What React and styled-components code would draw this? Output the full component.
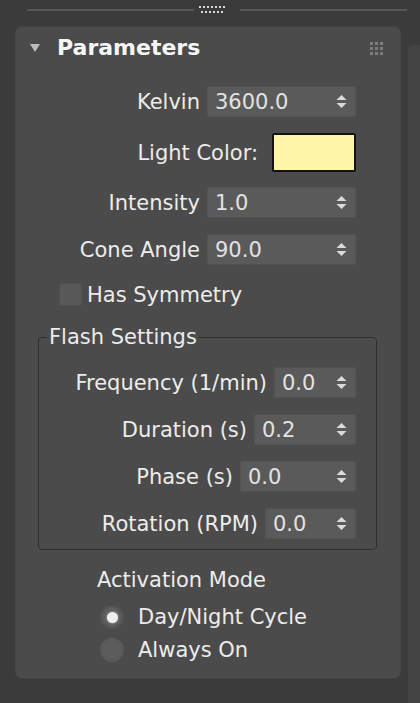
import React from 'react';
import styled, { createGlobalStyle } from 'styled-components';

const GlobalStyle = createGlobalStyle`
  html, body {
    margin: 0;
    padding: 0;
    background: #3b3b3b;
  }
  body {
    font-family: "DejaVu Sans", "Noto Sans", sans-serif;
    font-size: 21px;
    color: #ececec;
  }
`;

const PageStyled = styled.div`
  width: 420px;
  height: 703px;
  display: flex;
  flex-direction: column;
  overflow: hidden;
  background: #3b3b3b;
`;

const TopBarStyled = styled.div`
  height: 20px;
  display: flex;
  align-items: center;
  padding: 0 13px 0 27px;
`;

const SepLineStyled = styled.div`
  flex: 1;
  height: 2px;
  background: #585858;
`;

const TopGripStyled = styled.svg`
  margin: 0 12px 0 4px;
  flex: none;
`;

const MainStyled = styled.div`
  flex: 1;
  display: flex;
  padding: 7px 0 0 16px;
  gap: 8px;
`;

const PanelStyled = styled.div`
  width: 384px;
  height: 651px;
  box-sizing: border-box;
  background: #4b4b4b;
  border-radius: 5px;
  box-shadow: 0 0 0 1px #434343;
  display: flex;
  flex-direction: column;
`;

const TrackStyled = styled.div`
  width: 12px;
  margin-top: 18px;
  background: #434343;
  border-radius: 5px 0 0 0;
`;

const HeaderStyled = styled.div`
  height: 42px;
  display: flex;
  align-items: center;
  padding: 0 17px 0 14px;
`;

const TitleStyled = styled.div`
  flex: 1;
  margin-left: 17px;
  font-size: 22px;
  font-weight: bold;
  color: #f6f6f6;
  line-height: 26px;
`;

const BodyStyled = styled.div`
  display: flex;
  flex-direction: column;
  padding: 0 23px 0 22px;
`;

const RowStyled = styled.div`
  display: flex;
  align-items: center;
  justify-content: ${({ $left }) => ($left ? 'flex-start' : 'flex-end')};
  gap: ${({ $gap }) => $gap || 7}px;
  height: ${({ $h }) => $h || 31}px;
  margin-top: ${({ $mt }) => $mt || 0}px;
  padding: ${({ $pl, $pr }) => `0 ${$pr || 0}px 0 ${$pl || 0}px`};
  white-space: nowrap;
`;

const LabelStyled = styled.span`
  line-height: 24px;
`;

const SpinnerStyled = styled.div`
  width: ${({ $w }) => $w}px;
  height: 31px;
  box-sizing: border-box;
  background: #5a5a5a;
  border: 1px solid #535353;
  border-radius: 2px;
  display: flex;
  align-items: center;
  padding: 0 8px 0 7px;
  color: #e2e2e2;
`;

const ValueStyled = styled.span`
  flex: 1;
  line-height: 24px;
`;

const SwatchStyled = styled.div`
  width: 84px;
  height: 39px;
  box-sizing: border-box;
  border: 2px solid #121212;
  border-radius: 2px;
  background: #fff5a6;
`;

const CheckboxStyled = styled.div`
  width: 23px;
  height: 23px;
  box-sizing: border-box;
  background: #585858;
  border: 1px solid #515151;
  border-radius: 2px;
`;

const GroupStyled = styled.fieldset`
  margin: 19px 0 0 0;
  padding: 0;
  border: 1px solid #2e2e2e;
  border-radius: 4px;
  min-width: 0;
`;

const LegendStyled = styled.legend`
  margin-left: 8px;
  padding: 0 2px;
  line-height: 24px;
`;

const GroupRowsStyled = styled.div`
  display: flex;
  flex-direction: column;
  gap: 16px;
  padding: 18px 20px 10px 0;
`;

const CaptionStyled = styled.div`
  margin: 18px 0 0 59px;
  line-height: 24px;
`;

const RadioStyled = styled.div`
  flex: none;
  width: 24px;
  height: 24px;
  box-sizing: border-box;
  border-radius: 50%;
  background: #5c5c5c;
  border: 2px solid ${({ $on }) => ($on ? '#545454' : '#5a5a5a')};
  display: flex;
  align-items: center;
  justify-content: center;
  &::after {
    content: '';
    display: ${({ $on }) => ($on ? 'block' : 'none')};
    width: 11px;
    height: 11px;
    border-radius: 50%;
    background: #efefef;
    box-shadow: 0 0 2px 1px rgba(230, 230, 230, 0.3);
  }
`;

const SpinArrows = () => (
  <svg width="11" height="15" viewBox="0 0 11 15">
    <path d="M5.5 1 L10.5 6 H0.5 Z" fill="#dadada" />
    <path d="M0.5 9 H10.5 L5.5 14 Z" fill="#dadada" />
  </svg>
);

const Spinner = ({ label, value, width, mt, pr }) => (
  <RowStyled $mt={mt} $pr={pr}>
    <LabelStyled>{label}</LabelStyled>
    <SpinnerStyled $w={width}>
      <ValueStyled>{value}</ValueStyled>
      <SpinArrows />
    </SpinnerStyled>
  </RowStyled>
);

const TopGrip = () => (
  <TopGripStyled width="30" height="12" viewBox="0 0 30 12">
    {[0, 1, 2, 3, 4, 5, 6].map((i) => (
      <rect key={`a${i}`} x={1 + i * 4} y={2} width="2" height="2" fill="#d8d8d8" />
    ))}
    {[0, 1, 2, 3, 4, 5].map((i) => (
      <rect key={`b${i}`} x={3 + i * 4} y={7} width="2" height="2" fill="#d8d8d8" />
    ))}
  </TopGripStyled>
);

const PanelGrip = () => (
  <svg width="13" height="13" viewBox="0 0 13 13">
    {[0, 1, 2].map((r) =>
      [0, 1, 2].map((c) => (
        <rect key={`${r}${c}`} x={c * 5} y={r * 5} width="3" height="3" fill="#7c7c7c" />
      )),
    )}
  </svg>
);

const App = () => (
  <>
    <GlobalStyle />
    <PageStyled>
      <TopBarStyled>
        <SepLineStyled />
        <TopGrip />
        <SepLineStyled />
      </TopBarStyled>
      <MainStyled>
        <PanelStyled>
          <HeaderStyled>
            <svg width="10" height="8" viewBox="0 0 10 8">
              <path d="M0 0 H10 L5 8 Z" fill="#bcbcbc" />
            </svg>
            <TitleStyled>Parameters</TitleStyled>
            <PanelGrip />
          </HeaderStyled>
          <BodyStyled>
            <Spinner label="Kelvin" value="3600.0" width={149} mt={17} pr={21} />
            <RowStyled $mt={16} $h={39} $gap={14} $pr={21}>
              <LabelStyled>Light Color:</LabelStyled>
              <SwatchStyled />
            </RowStyled>
            <Spinner label="Intensity" value="1.0" width={149} mt={15} pr={21} />
            <Spinner label="Cone Angle" value="90.0" width={149} mt={16} pr={21} />
            <RowStyled $left $mt={18} $h={23} $gap={5} $pl={21}>
              <CheckboxStyled />
              <LabelStyled>Has Symmetry</LabelStyled>
            </RowStyled>
            <GroupStyled>
              <LegendStyled>Flash Settings</LegendStyled>
              <GroupRowsStyled>
                <Spinner label="Frequency (1/min)" value="0.0" width={82} />
                <Spinner label="Duration (s)" value="0.2" width={102} />
                <Spinner label="Phase (s)" value="0.0" width={116} />
                <Spinner label="Rotation (RPM)" value="0.0" width={91} />
              </GroupRowsStyled>
            </GroupStyled>
            <CaptionStyled>Activation Mode</CaptionStyled>
            <RowStyled $left $mt={13} $h={24} $gap={14} $pl={62}>
              <RadioStyled $on />
              <LabelStyled>Day/Night Cycle</LabelStyled>
            </RowStyled>
            <RowStyled $left $mt={9} $h={24} $gap={14} $pl={62}>
              <RadioStyled />
              <LabelStyled>Always On</LabelStyled>
            </RowStyled>
          </BodyStyled>
        </PanelStyled>
        <TrackStyled />
      </MainStyled>
    </PageStyled>
  </>
);

export default App;
